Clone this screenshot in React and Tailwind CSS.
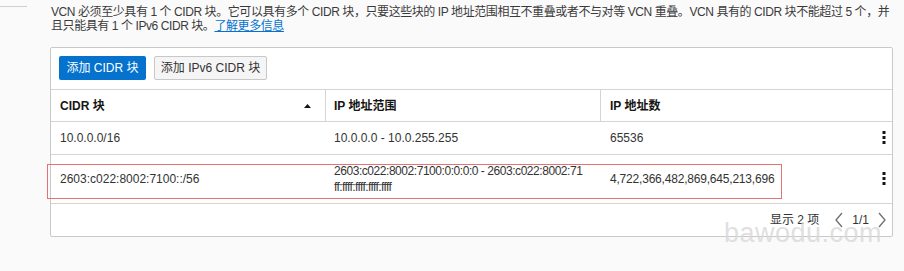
import React from 'react';

const font = { fontFamily: '"Liberation Sans", Arial, "Noto Sans CJK SC", sans-serif' };

function Kebab() {
	return (
		<svg width="4" height="14" viewBox="0 0 4 14" className="text-[#161513]">
			<rect x="0.5" y="0" width="3" height="3" fill="currentColor" />
			<rect x="0.5" y="5" width="3" height="3" fill="currentColor" />
			<rect x="0.5" y="10" width="3" height="3" fill="currentColor" />
		</svg>
	);
}

function Chevron({ dir }) {
	return (
		<svg width="10" height="16" viewBox="0 0 10 16" className="text-[#6f6f6f]">
			{dir === 'left'
				? <polyline points="8,1 2,8 8,15" fill="none" stroke="currentColor" strokeWidth="1.3" />
				: <polyline points="2,1 8,8 2,15" fill="none" stroke="currentColor" strokeWidth="1.3" />}
		</svg>
	);
}

export default function App() {
	return (
		<div className="relative w-[904px] h-[271px] bg-[#fafafa] overflow-hidden text-[12px] text-[#333]" style={font}>
			<div className="absolute left-0 top-[6px] w-[27px] h-px bg-[#cfcfcf]" />

			<div className="pl-[50px] pt-[5px]">
				<p className="ml-px leading-[14px] text-[#3a3a3a] whitespace-nowrap">
					<span className="tracking-[-0.42px]">VCN 必须至少具有 1 个 CIDR 块。它可以具有多个 CIDR 块，只要这些块的 IP 地址范围相互不重叠或者不与对等 VCN 重叠。VCN 具有的 CIDR 块不能超过 5 个，并</span>
					<br />
					<span className="tracking-[-0.42px]">且只能具有 1 个 IPv6 CIDR 块。</span><span className="text-[#0572ce] underline tracking-[-0.42px]">了解更多信息</span>
				</p>

				<div className="relative mt-[14px] w-[843px] h-[190px] bg-white border border-[#c9c9c9] rounded-[2px]">
					<div className="flex items-start gap-[8px] h-[41px] pt-[8px] pl-[8px]">
						<button className="h-[24px] w-[87px] bg-[#0572ce] text-white rounded-[2px]">添加 CIDR 块</button>
						<button className="h-[24px] w-[113px] bg-[#f5f5f5] border border-[#c8c8c8] text-[#333] rounded-[2px]">添加 IPv6 CIDR 块</button>
					</div>

					<div className="flex h-[33px] border-t border-b border-[#d4d4d4] font-bold text-[#161513]">
						<div className="w-[275px] flex items-center justify-between pl-[9px] pr-[14px] border-r border-[#d4d4d4]">
							<span>CIDR 块</span>
							<svg width="7" height="4" viewBox="0 0 7 4"><polygon points="3.5,0 7,4 0,4" fill="#161513" /></svg>
						</div>
						<div className="w-[275px] flex items-center pl-[8px] border-r border-[#d4d4d4]">IP 地址范围</div>
						<div className="flex-1 flex items-center pl-[9px]">IP 地址数</div>
					</div>

					<div className="flex h-[33px] border-b border-[#d4d4d4]">
						<div className="w-[275px] flex items-center pl-[9px]">10.0.0.0/16</div>
						<div className="w-[275px] flex items-center pl-[8px]">10.0.0.0 - 10.0.255.255</div>
						<div className="flex-1 flex items-center pl-[9px]">65536</div>
						<div className="w-[28px] flex items-center justify-end pr-[6px]"><Kebab /></div>
					</div>

					<div className="flex h-[49px] border-b border-[#d4d4d4]">
						<div className="w-[275px] flex items-center pl-[9px]">2603:c022:8002:7100::/56</div>
						<div className="w-[275px] flex items-center pl-[8px] leading-[16px] whitespace-nowrap">
							<span className="tracking-[-0.45px]">2603:c022:8002:7100:0:0:0:0 - 2603:c022:8002:71<br /><span className="tracking-[-0.6px]">ff:ffff:ffff:ffff:ffff</span></span>
						</div>
						<div className="flex-1 flex items-center pl-[9px] tracking-[-0.2px]">4,722,366,482,869,645,213,696</div>
						<div className="w-[28px] flex items-center justify-end pr-[6px]"><Kebab /></div>
					</div>

					<div className="flex items-center justify-end h-[32px] pr-[5px] gap-[8px]">
						<span className="mr-[7px]">显示 2 项</span>
						<Chevron dir="left" />
						<span>1/1</span>
						<Chevron dir="right" />
					</div>

					<div className="absolute left-[-4px] top-[116px] w-[735px] h-[35px] border-[1.5px] border-[#e57373]" />
				</div>
			</div>

			<div className="absolute left-[724px] top-[218px] text-[27px] leading-[30px] tracking-[0.5px] text-[#d8d8d8]/80">bawodu.com</div>
		</div>
	);
}
